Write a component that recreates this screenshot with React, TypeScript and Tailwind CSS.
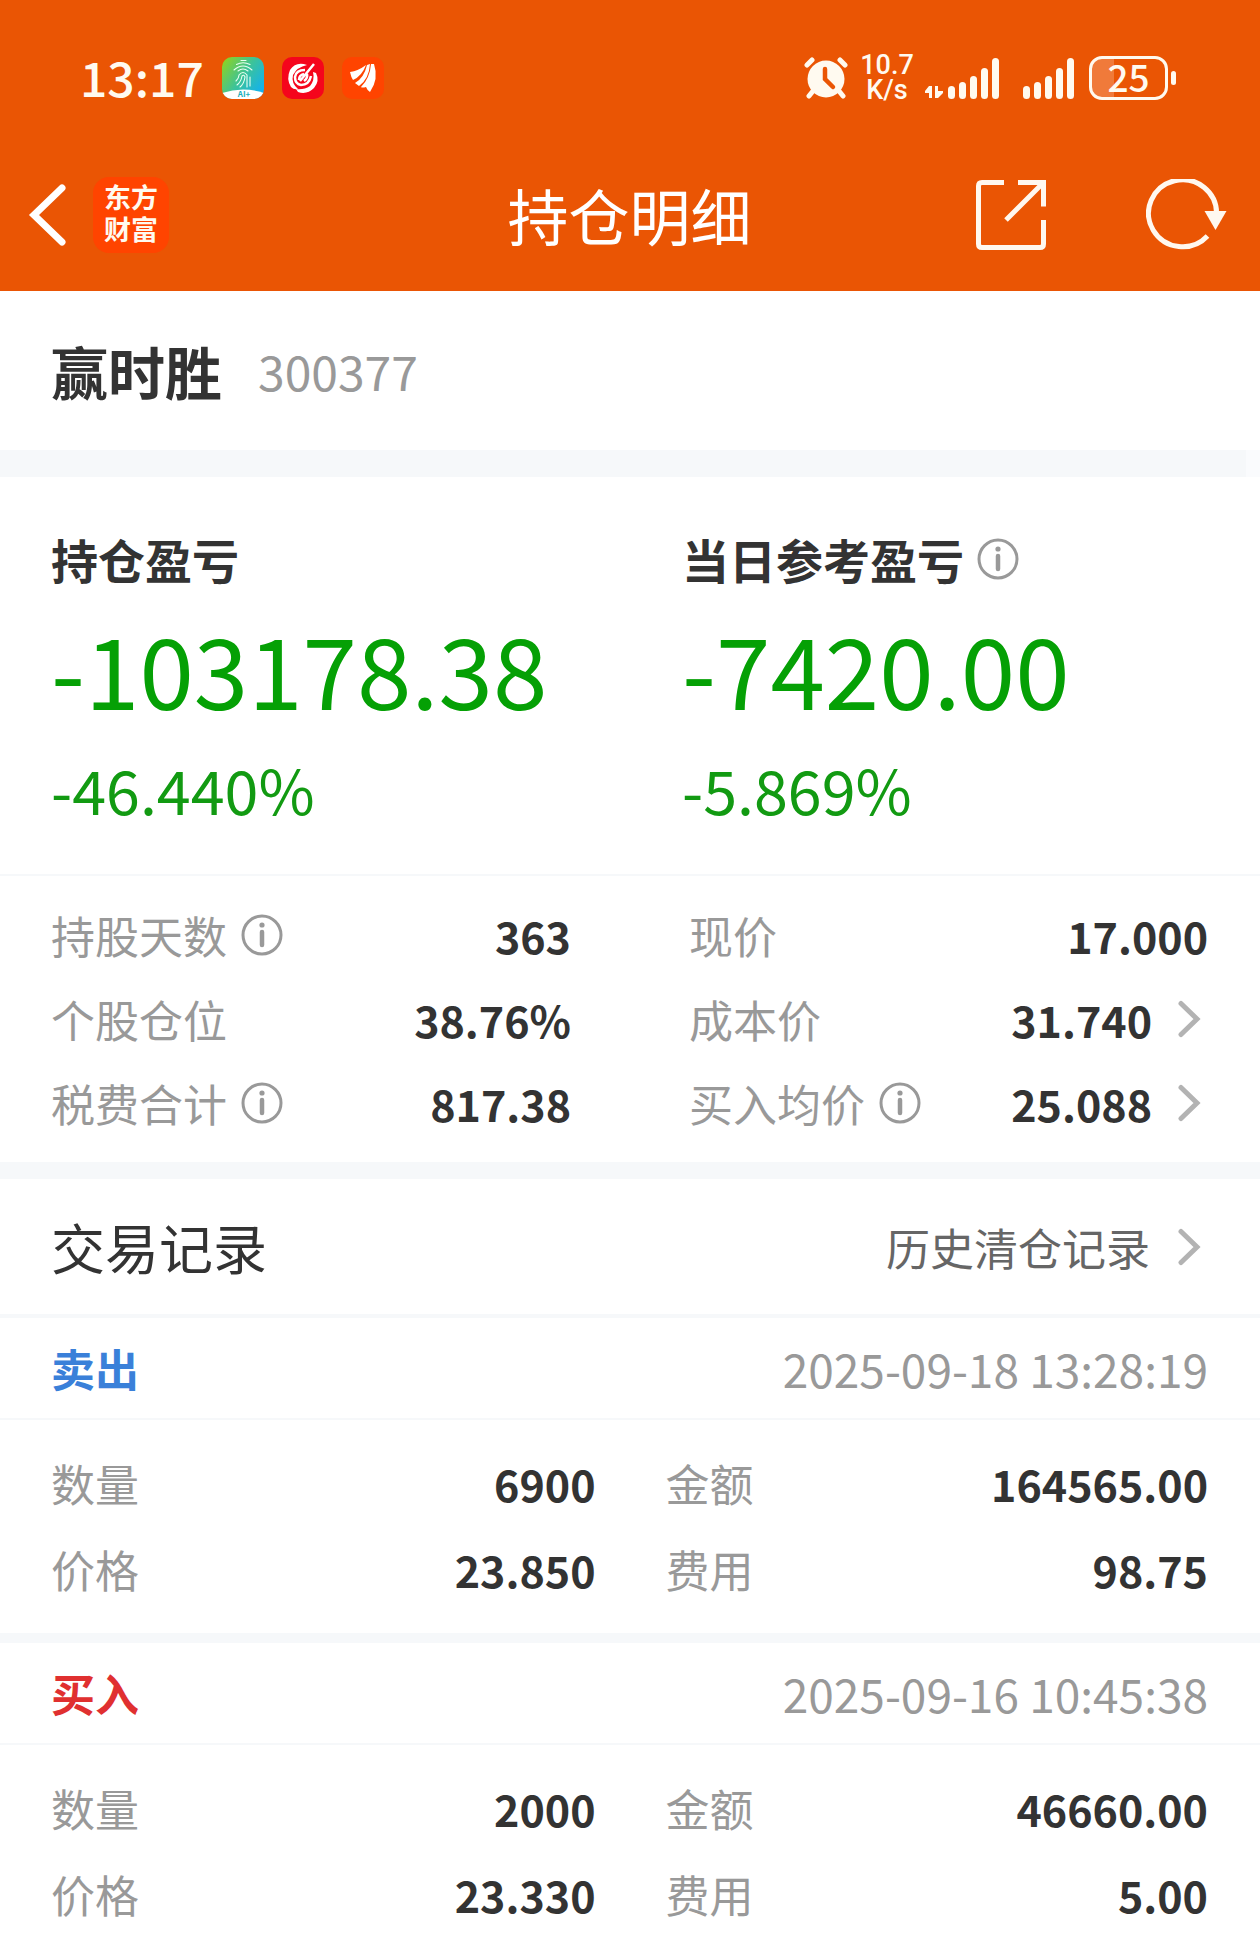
import React from 'react';

interface StatProps {
  label: string;
  value: string;
  info?: boolean;
  link?: boolean;
}

interface TradeRecord {
  type: 'sell' | 'buy';
  time: string;
  quantity: string;
  amount: string;
  price: string;
  fee: string;
}

const records: TradeRecord[] = [
  {
    type: 'sell',
    time: '2025-09-18 13:28:19',
    quantity: '6900',
    amount: '164565.00',
    price: '23.850',
    fee: '98.75',
  },
  {
    type: 'buy',
    time: '2025-09-16 10:45:38',
    quantity: '2000',
    amount: '46660.00',
    price: '23.330',
    fee: '5.00',
  },
];

const leftStats: StatProps[] = [
  { label: '持股天数', value: '363', info: true },
  { label: '个股仓位', value: '38.76%' },
  { label: '税费合计', value: '817.38', info: true },
];

const rightStats: StatProps[] = [
  { label: '现价', value: '17.000' },
  { label: '成本价', value: '31.740', link: true },
  { label: '买入均价', value: '25.088', info: true, link: true },
];

const InfoButton: React.FC<{ label: string }> = ({ label }) => (
  <button type="button" aria-label={`${label}说明`} className="shrink-0 text-[#999999]">
    <svg className="block h-[42px] w-[42px]" viewBox="0 0 42 42" fill="none" stroke="currentColor">
      <circle cx="21" cy="21" r="19" strokeWidth="3" />
      <path d="M21 18v13" strokeWidth="4.500" strokeLinecap="round" />
      <circle cx="21" cy="11" r="2.600" fill="currentColor" stroke="none" />
    </svg>
  </button>
);

const ChevronRight = () => (
  <svg
    className="block h-10 w-6 shrink-0 text-[#b3b3b3]"
    viewBox="0 0 24 40"
    fill="none"
    stroke="currentColor"
    strokeWidth="5"
    strokeLinecap="round"
  >
    <path d="M3 4.500L19 20L3 35.500" />
  </svg>
);

const SignalBars = () => (
  <svg className="block h-[42px] w-[52px]" viewBox="0 0 52 42" fill="#fffaf0">
    <rect x="0" y="29" width="7" height="13" rx="3.500" />
    <rect x="11" y="25" width="7" height="17" rx="3.500" />
    <rect x="22" y="19" width="7" height="23" rx="3.500" />
    <rect x="33" y="11" width="7" height="31" rx="3.500" />
    <rect x="44" y="1" width="7" height="41" rx="3.500" />
  </svg>
);

const StatusBar = () => (
  <div className="flex items-center justify-between pt-[56px] pr-[84px] pb-[39px] pl-20">
    <div className="flex h-11 items-center gap-[18px]">
      <span className="pb-1 text-[48px] leading-[44px] font-medium">13:17</span>
      <svg className="block h-[42px] w-[42px]" viewBox="0 0 42 42">
        <defs>
          <linearGradient id="fingerprint" x1="0" y1="0.100" x2="1" y2="0.800">
            <stop offset="0" stopColor="#8fd320" />
            <stop offset="0.500" stopColor="#3cc39a" />
            <stop offset="1" stopColor="#10b0f4" />
          </linearGradient>
          <clipPath id="appShape">
            <rect width="42" height="42" rx="10" />
          </clipPath>
        </defs>
        <g clipPath="url(#appShape)">
          <rect width="42" height="42" fill="url(#fingerprint)" />
          <path d="M0 36Q21 29 42 36V42H0z" fill="#fff" />
          <g fill="none" stroke="#e9fff2" strokeWidth="1.100" strokeLinecap="round">
            <path d="M19 3.500h5M14.500 7.500Q21 4 28 7.500M12 13Q21 5 30 13M16 14Q21 10 26 14" />
            <path d="M14 24Q17 21 17 18Q21 13 25 18V30M15 28Q19 25 20 19Q22 17 23 20Q22 27 18 30M28 20V29" />
          </g>
          <text x="22" y="40" textAnchor="middle" fontSize="8" fontWeight="700" fill="#18aebb">
            AI+
          </text>
        </g>
      </svg>
      <svg className="block h-[42px] w-[42px]" viewBox="0 0 42 42">
        <rect width="42" height="42" rx="10" fill="#f5051c" />
        <g fill="#fff">
          <path d="M25 8Q14 4 8 13Q4 22 9 30Q12 33 16 32Q9 26 11 18Q15 10 25 8z" />
          <path d="M14 32Q22 33 28 29Q33 23 31 15L34 16Q38 24 32 31Q25 38 16 35z" />
        </g>
        <g fill="none" stroke="#fff" strokeWidth="2.500">
          <path d="M23 13Q14 13 13 20Q13 27 19 28Q27 28 29 19" />
          <path d="M32 7L18 24M22 17Q17 18 17 23M22 24Q26 21 25 17" />
        </g>
      </svg>
      <svg className="block h-[42px] w-[42px]" viewBox="0 0 42 42">
        <rect width="42" height="42" rx="10" fill="#ff4400" />
        <g fill="#fff">
          <path d="M8 15Q16 14 24 8Q20 19 11 23Q9 20 8 15z" />
          <path d="M25 8L28 7Q27 22 17 29L13 26Q22 21 25 8z" />
          <path d="M29 7H32Q37 22 28 35Q25 33 24 30Q20 31 19 30Q28 21 29 7z" />
        </g>
      </svg>
    </div>
    <div className="flex h-11 items-center">
      <svg className="block h-[42px] w-[44px]" viewBox="0 0 44 42">
        <g stroke="#fffaf0" strokeWidth="5" strokeLinecap="round">
          <path d="M3 8L8 3M41 8L36 3M9 34L5 39M35 34L39 39" />
        </g>
        <circle cx="22" cy="22" r="18.500" fill="#fffaf0" />
        <path d="M21 12V22L29 30" fill="none" stroke="#ea5504" strokeWidth="4.500" strokeLinecap="round" />
      </svg>
      <span className="ml-3 w-[54px] text-center font-['Roboto',sans-serif] text-[27px] leading-[25px] font-medium">
        10.7
        <br />
        K/s
      </span>
      <svg className="mt-7 ml-[10px] block h-[14px] w-5" viewBox="0 0 20 14" fill="#fffaf0">
        <path d="M5 1H8V13H5V8H1V6zM11 1H14V6H19V8L14 13H11z" />
      </svg>
      <div className="ml-1">
        <SignalBars />
      </div>
      <div className="ml-[23px]">
        <SignalBars />
      </div>
      <div className="ml-[14px] flex items-center gap-[3px]">
        <div className="flex h-11 w-[79px] items-center justify-center rounded-[13px] border-3 border-[#fffaf0] bg-linear-to-r from-[#f07a3a] from-30% to-transparent to-30% pb-1 text-[37px] leading-[34px] font-medium">
          25
        </div>
        <div className="h-[14px] w-[5px] rounded-full bg-[#fffaf0]" />
      </div>
    </div>
  </div>
);

const NavBar = () => (
  <nav className="grid h-[152px] grid-cols-[1fr_auto_1fr] items-center pr-[33px] pl-7">
    <div className="flex items-center gap-[25px]">
      <button type="button" aria-label="返回">
        <svg className="block h-16 w-10" viewBox="0 0 40 64" fill="none" stroke="#fff" strokeWidth="7" strokeLinecap="round">
          <path d="M34 5L6 32L34 59" />
        </svg>
      </button>
      <div className="flex h-[76px] w-[76px] items-center justify-center rounded-2xl bg-[#ff4400] pb-1 text-center text-[27px] leading-8 font-bold">
        东方
        <br />
        财富
      </div>
    </div>
    <h1 className="pl-1 text-[61px] leading-[72px] text-white">持仓明细</h1>
    <div className="flex items-center justify-end gap-[99px]">
      <button type="button" aria-label="分享">
        <svg className="block h-[72px] w-[72px]" viewBox="0 0 72 72" fill="none" stroke="#fff8ef" strokeWidth="5">
          <path d="M29 3.500H7Q3.500 3.500 3.500 7V65Q3.500 68.500 7 68.500H65Q68.500 68.500 68.500 65V41" />
          <path d="M43 3.500H68.500V27.500M68 4L31 41" />
        </svg>
      </button>
      <button type="button" aria-label="刷新">
        <svg className="block h-[72px] w-[81px]" viewBox="0 0 81 72" fill="none" stroke="#fff8ef" strokeWidth="5">
          <path d="M70.500 36A34 33.500 0 1 0 61.500 57" />
          <path d="M58.500 32H80.500L69.500 51z" fill="#fff8ef" stroke="none" />
        </svg>
      </button>
    </div>
  </nav>
);

const StatRow: React.FC<StatProps> = ({ label, value, info, link }) => (
  <div className="flex h-[84px] items-center justify-between">
    <dt className="flex items-center gap-[14px] text-[#999999]">
      {label}
      {info && <InfoButton label={label} />}
    </dt>
    <dd className="text-[43px] font-bold text-[#333333]">
      {link ? (
        <button type="button" className="flex items-center gap-[26px] pr-[6px]">
          {value}
          <ChevronRight />
        </button>
      ) : (
        value
      )}
    </dd>
  </div>
);

const Detail: React.FC<{ label: string; value: string }> = ({ label, value }) => (
  <div className="flex h-[86px] items-center justify-between odd:pr-[34px] even:pl-9">
    <dt className="text-[#999999]">{label}</dt>
    <dd className="text-[43px] font-bold text-[#333333]">{value}</dd>
  </div>
);

const TradeCard: React.FC<{ record: TradeRecord }> = ({ record }) => (
  <li className="border-b-10 border-[#f6f8fa] last:border-b-0">
    <div className="flex h-[102px] items-center justify-between border-b-2 border-[#f6f8fa] pr-[52px] pl-[51px]">
      <span className={`font-bold ${record.type === 'sell' ? 'text-[#3a80d9]' : 'text-[#e03030]'}`}>
        {record.type === 'sell' ? '卖出' : '买入'}
      </span>
      <time className="text-[46px] text-[#999999]">{record.time}</time>
    </div>
    <dl className="grid grid-cols-2 pt-5 pr-[52px] pb-[21px] pl-[51px]">
      <Detail label="数量" value={record.quantity} />
      <Detail label="金额" value={record.amount} />
      <Detail label="价格" value={record.price} />
      <Detail label="费用" value={record.fee} />
    </dl>
  </li>
);

export default function App() {
  return (
    <div className="bg-white font-['Noto_Sans_CJK_SC',sans-serif] text-[44px] leading-[60px] text-[#333333]">
      <header className="bg-[#ea5504] text-[#fffaf0]">
        <StatusBar />
        <NavBar />
      </header>

      <section className="flex h-[159px] items-center gap-9 px-[51px] pb-[2px]">
        <h2 className="text-[57px] font-bold">赢时胜</h2>
        <span className="text-[48px] text-[#999999]">300377</span>
      </section>
      <div className="h-[27px] border-r-14 border-[#fafbfd] bg-[#f6f8fa]" />

      <section className="grid h-[399px] grid-cols-2 border-b-2 border-[#f6f8fa] pt-[52px]">
        <div className="pl-[51px]">
          <h3 className="text-[47px] font-bold">持仓盈亏</h3>
          <p className="mt-5 text-[98px] leading-[116px] text-[#05a005]">-103178.38</p>
          <p className="mt-6 text-[61px] leading-[80px] text-[#129a12]">-46.440%</p>
        </div>
        <div className="pl-[52px]">
          <h3 className="flex items-center gap-[13px] text-[47px] font-bold">
            当日参考盈亏
            <InfoButton label="当日参考盈亏" />
          </h3>
          <p className="mt-5 text-[98px] leading-[116px] text-[#05a005]">-7420.00</p>
          <p className="mt-6 text-[61px] leading-[80px] text-[#129a12]">-5.869%</p>
        </div>
      </section>

      <section className="grid grid-cols-2 border-b-17 border-[#f6f8fa] pt-[17px] pb-[17px]">
        <dl className="pr-[59px] pl-[51px]">
          {leftStats.map((stat) => (
            <StatRow key={stat.label} {...stat} />
          ))}
        </dl>
        <dl className="pr-[52px] pl-[59px]">
          {rightStats.map((stat) => (
            <StatRow key={stat.label} {...stat} />
          ))}
        </dl>
      </section>

      <section>
        <div className="flex h-[139px] items-center justify-between border-b-4 border-[#f6f8fa] pr-[52px] pl-[51px]">
          <h2 className="text-[54px]">交易记录</h2>
          <button type="button" className="flex items-center gap-7 pr-[6px] text-[#666666]">
            历史清仓记录
            <ChevronRight />
          </button>
        </div>
        <ul>
          {records.map((record) => (
            <TradeCard key={record.time} record={record} />
          ))}
        </ul>
      </section>
    </div>
  );
}
